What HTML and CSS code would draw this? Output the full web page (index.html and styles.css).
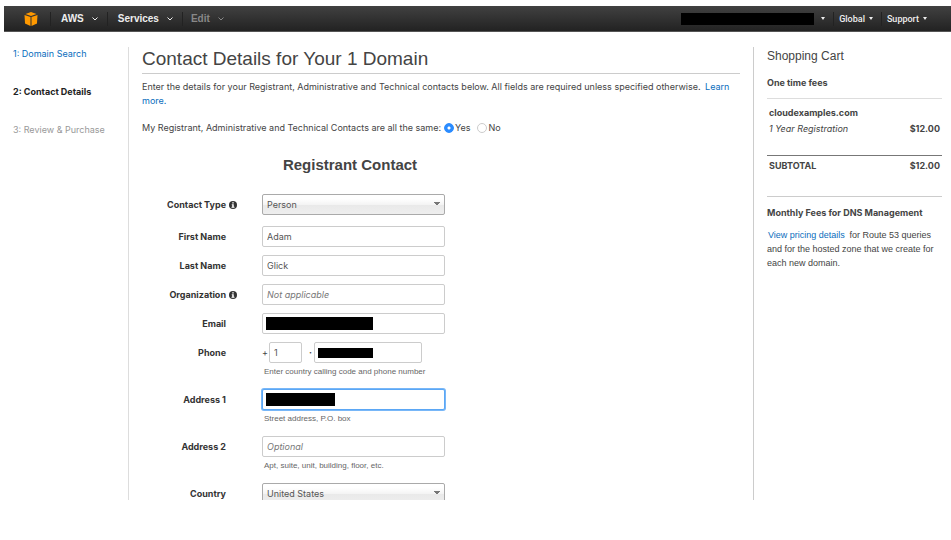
FILE: index.html
```html
<!DOCTYPE html>
<html lang="en">
<head>
<meta charset="utf-8">
<title>Contact Details</title>
<meta name="viewport" content="width=device-width, initial-scale=1">
<link rel="stylesheet" href="styles.css">
</head>
<body>
<header class="topbar">
  <a class="logo" href="#" aria-label="Home">
    <svg width="14" height="14" viewBox="0 0 28 28" aria-hidden="true">
      <path fill="#f90" d="M14 0 25 4 14 8 3 4Z"/>
      <path fill="#f90" d="M1 6 13 10V28L2 23Z"/>
      <path fill="#f90" d="M27 6 15 10V28L26 23Z"/>
    </svg>
  </a>
  <nav class="menu">
    <button class="menu-item" type="button">AWS <svg class="chevron" viewBox="0 0 6 4"><path d="M0.5 0.5 3 3 5.5 0.5"/></svg></button>
    <button class="menu-item" type="button">Services <svg class="chevron" viewBox="0 0 6 4"><path d="M0.5 0.5 3 3 5.5 0.5"/></svg></button>
    <button class="menu-item muted" type="button">Edit <svg class="chevron" viewBox="0 0 6 4"><path d="M0.5 0.5 3 3 5.5 0.5"/></svg></button>
  </nav>
  <nav class="menu account">
    <button class="menu-item" type="button" aria-label="Account"><span class="redacted account-name"></span><span class="caret"></span></button>
    <button class="menu-item" type="button">Global<span class="caret"></span></button>
    <button class="menu-item" type="button">Support<span class="caret"></span></button>
  </nav>
</header>
<div class="page">
  <nav class="steps">
    <a href="#">1: Domain Search</a>
    <strong>2: Contact Details</strong>
    <span>3: Review &amp; Purchase</span>
  </nav>
  <main class="content">
    <h1>Contact Details for Your 1 Domain</h1>
    <p class="intro">Enter the details for your Registrant, Administrative and Technical contacts below. All fields are required unless specified otherwise. <a href="#">Learn more.</a></p>
    <form>
      <div class="same" role="radiogroup" aria-labelledby="same-text">
        <span id="same-text">My Registrant, Administrative and Technical Contacts are all the same:</span>
        <label><input type="radio" name="same" checked>Yes</label>
        <label><input type="radio" name="same">No</label>
      </div>
      <h2>Registrant Contact</h2>
      <div class="fields">
        <div class="row type-row">
          <label for="type">Contact Type</label>
          <svg class="info" viewBox="0 0 16 16" aria-hidden="true"><circle cx="8" cy="8" r="8"/><path d="M6.500 2.500h3v2.500h-3zM5.500 6.500h4v5h1.500v2h-6v-2h1.500v-3h-1z"/></svg>
          <div class="control"><select id="type"><option>Person</option></select></div>
        </div>
        <div class="row">
          <label for="first">First Name</label>
          <div class="control"><input id="first" type="text" value="Adam"></div>
        </div>
        <div class="row">
          <label for="last">Last Name</label>
          <div class="control"><input id="last" type="text" value="Glick"></div>
        </div>
        <div class="row">
          <label for="org">Organization</label>
          <svg class="info" viewBox="0 0 16 16" aria-hidden="true"><circle cx="8" cy="8" r="8"/><path d="M6.500 2.500h3v2.500h-3zM5.500 6.500h4v5h1.500v2h-6v-2h1.500v-3h-1z"/></svg>
          <div class="control"><input id="org" type="text" placeholder="Not applicable"></div>
        </div>
        <div class="row">
          <label for="email">Email</label>
          <div class="control"><input id="email" type="email"><span class="redacted cover email-cover"></span></div>
        </div>
        <div class="row">
          <label for="phone">Phone</label>
          <div class="control phone">
            <span class="plus">+</span>
            <input class="code" type="text" value="1" aria-label="Country calling code">
            <span class="dot">·</span>
            <div class="number"><input id="phone" type="tel"><span class="redacted cover phone-cover"></span></div>
          </div>
          <p class="hint">Enter country calling code and phone number</p>
        </div>
        <div class="row">
          <label for="address1">Address 1</label>
          <div class="control"><input class="active" id="address1" type="text"><span class="redacted cover address-cover"></span></div>
          <p class="hint">Street address, P.O. box</p>
        </div>
        <div class="row">
          <label for="address2">Address 2</label>
          <div class="control"><input id="address2" type="text" placeholder="Optional"></div>
          <p class="hint">Apt, suite, unit, building, floor, etc.</p>
        </div>
        <div class="row">
          <label for="country">Country</label>
          <div class="control"><select id="country"><option>United States</option></select></div>
        </div>
      </div>
    </form>
  </main>
  <aside class="cart">
    <h2>Shopping Cart</h2>
    <h3>One time fees</h3>
    <table>
      <tbody>
        <tr class="item-name"><th colspan="2" scope="row">cloudexamples.com</th></tr>
        <tr class="item"><td>1 Year Registration</td><td class="price">$12.00</td></tr>
      </tbody>
      <tfoot>
        <tr><th scope="row">SUBTOTAL</th><td class="price">$12.00</td></tr>
      </tfoot>
    </table>
    <h3 class="monthly">Monthly Fees for DNS Management</h3>
    <p><a class="pricing" href="#">View pricing details</a> for Route 53 queries and for the hosted zone that we create for each new domain.</p>
  </aside>
</div>
</body>
</html>
```

FILE: styles.css
```css
* {
  box-sizing: border-box;
}

body {
  display: flex;
  flex-direction: column;
  height: 100vh;
  margin: 0;
  padding: 6px 0 40px 4px;
  background: #fff;
  color: #444;
  font: 9px/14px Inter, "Liberation Sans", Arial, sans-serif;
}

h1, h2, h3, p {
  margin: 0;
}

h1, h2, .hint, .cart p {
  font-family: "Liberation Sans", Arial, sans-serif;
}

a {
  color: #0a6ebd;
  text-decoration: none;
}

button, input, select {
  margin: 0;
  font: inherit;
  color: inherit;
}

.redacted {
  display: block;
  background: #000;
}

/* Top bar */
.topbar {
  display: flex;
  flex: none;
  align-items: center;
  height: 26px;
  border-bottom: 1px solid #555;
  background: linear-gradient(#414141, #222);
}

.logo {
  display: flex;
  justify-content: center;
  width: 46px;
  padding-left: 8px;
}

.menu {
  display: flex;
  align-items: center;
}

.menu-item {
  display: flex;
  align-items: center;
  gap: 8px;
  height: 14px;
  padding: 0 9px 0 10px;
  border: 0;
  border-left: 1px solid #222;
  background: none;
  color: #eee;
  font: bold 10px/14px "Liberation Sans", Arial, sans-serif;
}

.menu-item.muted {
  padding-left: 8px;
  color: #888;
}

.muted .chevron {
  color: #888;
}

.chevron {
  width: 6px;
  height: 4px;
  fill: none;
  stroke: currentColor;
}

.account {
  margin-left: auto;
  padding-right: 16px;
}

.account .menu-item {
  gap: 4px;
  padding: 0 8px 0 5px;
  font: 500 9px/14px Roboto, "Liberation Sans", sans-serif;
}

.account .menu-item:first-child {
  gap: 7px;
  border: 0;
}

.account-name {
  width: 133px;
  height: 12px;
}

.caret {
  border: 2px solid transparent;
  border-top: 3px solid currentColor;
  border-bottom: 0;
}

/* Page columns */
.page {
  display: grid;
  flex: 1;
  grid-template-columns: 125px minmax(0, 1fr) 198px;
  min-height: 0;
  padding-top: 15px;
  overflow: hidden;
}

.steps {
  display: flex;
  flex-direction: column;
  gap: 24px;
  padding-left: 9px;
  border-right: 1px solid #ddd;
}

.steps strong {
  color: #222;
}

.steps span {
  color: #999;
}

.content {
  min-height: 0;
  padding: 0 13px;
  overflow: hidden;
}

h1 {
  height: 27px;
  border-bottom: 1px solid #ccc;
  font-size: 19px;
  font-weight: normal;
  line-height: 24px;
}

.intro {
  padding-top: 6px;
}

.intro a {
  margin-left: 2px;
}

.same {
  display: flex;
  align-items: center;
  gap: 3px;
  padding-top: 13px;
}

.same label {
  display: flex;
  align-items: center;
  gap: 1px;
  margin-right: 4px;
}

.same input {
  width: 10px;
  height: 10px;
  border: 1px solid #ccc;
  border-radius: 50%;
  appearance: none;
}

.same input:checked {
  border-color: #2b8cff;
  background: radial-gradient(#fff 1px, #2b8cff 2px);
}

.content h2 {
  width: 416px;
  padding-top: 20px;
  font-size: 15px;
  line-height: 20px;
  text-align: center;
}

/* Contact form */
.fields {
  display: flex;
  flex-direction: column;
  gap: 8px;
  padding-top: 19px;
}

.row {
  display: grid;
  grid-template-columns: 84px 36px 183px;
  align-items: center;
}

.type-row {
  margin-bottom: 3px;
}

.row label {
  color: #333;
  font-weight: bold;
  text-align: right;
}

.info {
  width: 8px;
  height: 8px;
  margin-left: 3px;
  fill: #333;
}

.info path {
  fill: #fff;
}

.control {
  position: relative;
  grid-column: 3;
}

.control input, .control select {
  display: block;
  width: 100%;
  height: 21px;
  padding: 0 4px;
  border: 1px solid #ccc;
  border-radius: 2px;
  background: #fff;
  color: #555;
}

.control select {
  border-color: #aaa;
  background:
    linear-gradient(to bottom right, #777 50%, transparent 50%) right 4px top 7px / 3px 4px no-repeat,
    linear-gradient(to bottom left, #777 50%, transparent 50%) right 7px top 7px / 3px 4px no-repeat,
    linear-gradient(#fff 20%, #f4f4f4 50%, #e9e9e9 52%, #eee);
  appearance: none;
}

.control input::placeholder {
  color: #777;
  font-style: italic;
  opacity: 1;
}

.control .active {
  border-color: #5ba7f5;
  box-shadow: 0 0 0 1px #78b7f8;
}

.control.phone {
  display: flex;
  align-items: center;
}

.plus {
  width: 7px;
}

.phone .code {
  width: 33px;
}

.dot {
  width: 12px;
  padding-left: 7px;
  font-weight: bold;
}

.number {
  position: relative;
  width: 108px;
}

.cover {
  position: absolute;
  top: 4px;
  left: 4px;
  height: 13px;
}

.email-cover {
  width: 107px;
}

.phone-cover {
  top: 6px;
  width: 55px;
  height: 10px;
}

.address-cover {
  width: 69px;
}

.hint {
  grid-column: 3;
  height: 18px;
  padding: 1px 0 0 2px;
  color: #666;
  font-size: 8px;
  line-height: 16px;
}

/* Shopping cart */
.cart {
  padding: 0 9px 0 13px;
  border-left: 1px solid #ccc;
}

.cart h2 {
  font-size: 12px;
  font-weight: normal;
  line-height: 18px;
}

.cart h3 {
  padding: 11px 0 8px;
  font-size: 9px;
}

.cart table {
  width: 100%;
  border-top: 1px solid #ddd;
  border-bottom: 1px solid #ccc;
  border-collapse: collapse;
}

.cart th, .cart td {
  padding: 0 2px;
  text-align: left;
}

.item-name th {
  padding-top: 7px;
}

.item td {
  padding: 2px 2px 19px;
  font-style: italic;
}

.cart .price {
  font-style: normal;
  font-weight: bold;
  text-align: right;
}

.cart tfoot tr {
  border-top: 1px solid #777;
}

.cart tfoot th, .cart tfoot td {
  padding-top: 3px;
  padding-bottom: 23px;
}

.cart .monthly {
  padding: 9px 0 8px;
}

.pricing {
  margin: 0 2px 0 1px;
}
```
